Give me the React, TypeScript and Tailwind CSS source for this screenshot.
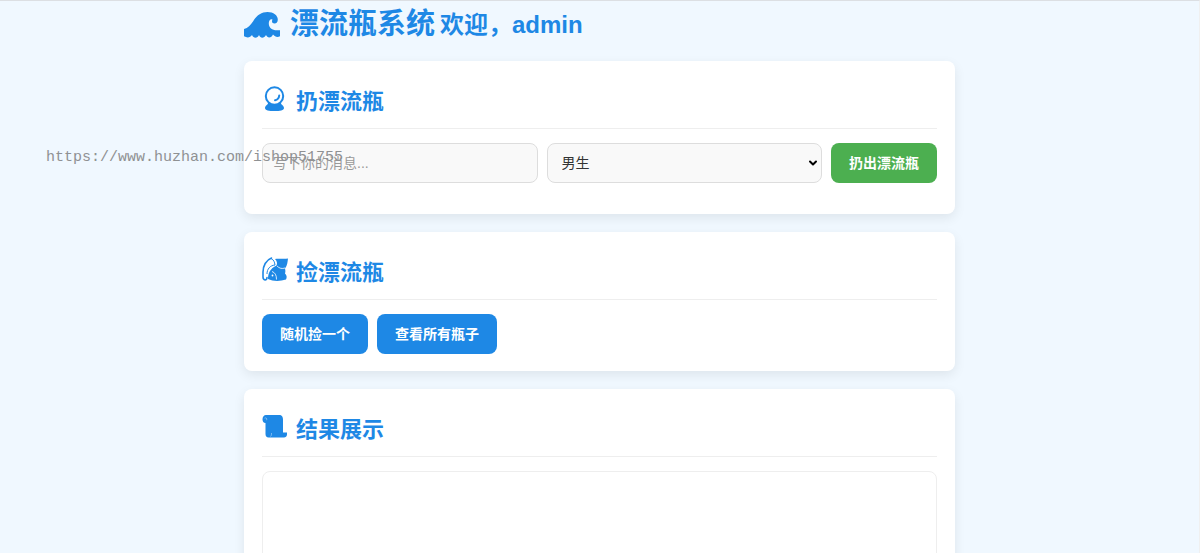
import React, { useState } from 'react';
import { clsx } from 'clsx';
import { ChevronDown } from 'lucide-react';

interface IconProps {
    className?: string;
}

const WaveIcon: React.FC<IconProps> = ({ className }) => (
    <svg viewBox="0 0 36 26" className={className} fill="currentColor" aria-hidden="true">
        <path d="M0 17C4 16 6.500 13 9 9.500C12 4 17 0 23.500 0C29.500 0 33.800 3.500 33.800 7.500C33.800 10 32.500 11.500 30.500 11.500C29 11.500 28 10.500 28 9.200C28 8.300 28.500 7.800 28.300 7.300C26 6.800 24.800 8.800 24.800 11.500C24.800 15.500 28 18.300 33 18.300H36V24.300C33.500 25.500 31 25 29 22.500C27.500 26 23.500 26.500 22 23C20 26.500 16.500 26.500 15 23C13.500 26.500 9.500 26.500 8 23C6 26 3 26 0 24.300Z" />
    </svg>
);

const CrystalBallIcon: React.FC<IconProps> = ({ className }) => (
    <svg viewBox="0 0 26 26" className={className} aria-hidden="true">
        <path d="M6 17H19C19 19 22 19.500 22 22C22 24.500 18 25 12.500 25S3 24.500 3 22C3 19.500 6 19 6 17Z" fill="currentColor" />
        <circle cx="12.500" cy="10" r="8.700" fill="white" stroke="currentColor" strokeWidth="2" />
        <path d="M17.200 9.500C17 12 15.500 13.800 13 14.300" fill="none" stroke="currentColor" strokeWidth="2" strokeLinecap="round" />
    </svg>
);

const FishingIcon: React.FC<IconProps> = ({ className }) => (
    <svg viewBox="0 0 26 26" className={className} aria-hidden="true">
        <path d="M9.500 1C4 3 1 9 1 15V20C1 23.500 5 24 5 20.500" fill="none" stroke="currentColor" strokeWidth="1.600" strokeLinecap="round" />
        <path d="M9 1.500C12 3 12.500 5 13 8M5 17C5 12 8 8.500 13 8" fill="none" stroke="currentColor" strokeWidth="1" />
        <path d="M13 2C17 1 21 2.500 26 1.500C25.500 5 25.500 8 23 11.500C23.500 13.500 23.500 15 23 16.500C25 18.500 25 20.500 24 22.500C18 24.500 11 24.500 6 22C6 16.500 8 11.500 14.500 8.500C15.500 6.500 15 4 13 2Z" fill="currentColor" />
        <path d="M10 14.500C13 15.500 14.500 18 14.500 22.500M15 9C17.500 11.500 20 12 23 11" fill="none" stroke="white" strokeWidth="0.800" />
        <circle cx="10.500" cy="18.500" r="0.900" fill="white" />
    </svg>
);

const ScrollIcon: React.FC<IconProps> = ({ className }) => (
    <svg viewBox="0 0 26 26" className={className} aria-hidden="true">
        <path d="M4 1H17C20 1 21 3 21 5.500V18.500H25V20.500C25 22.500 23.500 23.500 22 23.500H6.500C4.500 23.500 3.500 22 3.500 20V9C1.500 9 0.500 7.500 0.500 5.200S2 1 4 1Z" fill="currentColor" />
        <path d="M2.500 4.200C4 3.200 5.500 4.700 4.500 6.200M8.500 22.500C9.500 21.500 9.500 20.500 9.500 19" fill="none" stroke="white" strokeOpacity="0.500" strokeWidth="0.800" />
    </svg>
);

interface CardProps {
    title: string;
    icon: React.ReactNode;
    className?: string;
    children: React.ReactNode;
}

const Card: React.FC<CardProps> = ({ title, icon, className, children }) => (
    <section className={clsx("bg-white rounded-lg px-[18px] pt-[18px] shadow-[0_4px_12px_rgba(0,0,0,0.08)]", className)}>
        <h2 className="flex items-center gap-2 h-[50px] pb-1 mb-[14px] border-b border-[#eeeeee] text-[22px] font-bold text-[#1e88e5]">
            {icon}
            {title}
        </h2>
        {children}
    </section>
);

interface ButtonProps {
    color: 'blue' | 'green';
    onClick?: () => void;
    children: React.ReactNode;
}

const Button: React.FC<ButtonProps> = ({ color, onClick, children }) => (
    <button
        type="button"
        onClick={onClick}
        className={clsx(
            "h-10 px-[18px] rounded-lg text-sm font-bold text-white whitespace-nowrap",
            color === 'green' ? "bg-[#4caf50]" : "bg-[#1e88e5]"
        )}
    >
        {children}
    </button>
);

export default function App() {
    const [message, setMessage] = useState('');
    const [gender, setGender] = useState('male');

    return (
        <div className="relative min-h-screen bg-[#f0f8ff] border-t border-r border-t-[#dcdfe3] border-r-[#f0f0f0] font-['Liberation_Sans','Noto_Sans_CJK_SC',sans-serif] text-[#333333]">
            <main className="mx-auto max-w-[711px] pb-5">
                <header className="flex items-center h-[60px] pb-3 text-[#1e88e5] font-bold">
                    <WaveIcon className="w-9 h-[26px] mr-[10px]" />
                    <h1 className="text-[29px]">漂流瓶系统</h1>
                    <span className="ml-[5px] text-2xl">欢迎，admin</span>
                </header>

                <div className="flex flex-col gap-[18px]">
                    <Card title="扔漂流瓶" icon={<CrystalBallIcon className="w-[26px] h-[26px] mb-1.5" />} className="pb-[31px]">
                        <form className="grid grid-cols-[1fr_1fr_auto] gap-[9px]" onSubmit={(e) => e.preventDefault()}>
                            <input
                                type="text"
                                aria-label="消息"
                                placeholder="写下你的消息..."
                                value={message}
                                onChange={(e) => setMessage(e.target.value)}
                                className="w-full min-w-0 h-10 px-[10px] rounded-lg border border-[#dddddd] bg-[#f9f9f9] text-sm placeholder:text-[#999999]"
                            />
                            <div className="relative min-w-0">
                                <select
                                    aria-label="性别"
                                    value={gender}
                                    onChange={(e) => setGender(e.target.value)}
                                    className="appearance-none w-full h-10 px-[14px] rounded-lg border border-[#dddddd] bg-[#f9f9f9] text-sm"
                                >
                                    <option value="male">男生</option>
                                    <option value="female">女生</option>
                                </select>
                                <ChevronDown className="absolute right-[3px] top-3.5 w-3 h-3 text-black pointer-events-none" strokeWidth={4} />
                            </div>
                            <Button color="green">扔出漂流瓶</Button>
                        </form>
                    </Card>

                    <Card title="捡漂流瓶" icon={<FishingIcon className="w-[26px] h-[26px] mb-1.5" />} className="pb-[17px]">
                        <div className="flex gap-[9px]">
                            <Button color="blue">随机捡一个</Button>
                            <Button color="blue">查看所有瓶子</Button>
                        </div>
                    </Card>

                    <Card title="结果展示" icon={<ScrollIcon className="w-[26px] h-[26px] mb-1.5" />} className="pb-[18px]">
                        <div className="min-h-[180px] rounded-lg border border-[#eeeeee]" />
                    </Card>
                </div>
            </main>

            <span className="absolute left-[46px] top-[146px] font-['Liberation_Mono',monospace] text-[15px] text-[#8f9193] pointer-events-none">
                https://www.huzhan.com/ishop51755
            </span>
        </div>
    );
}
